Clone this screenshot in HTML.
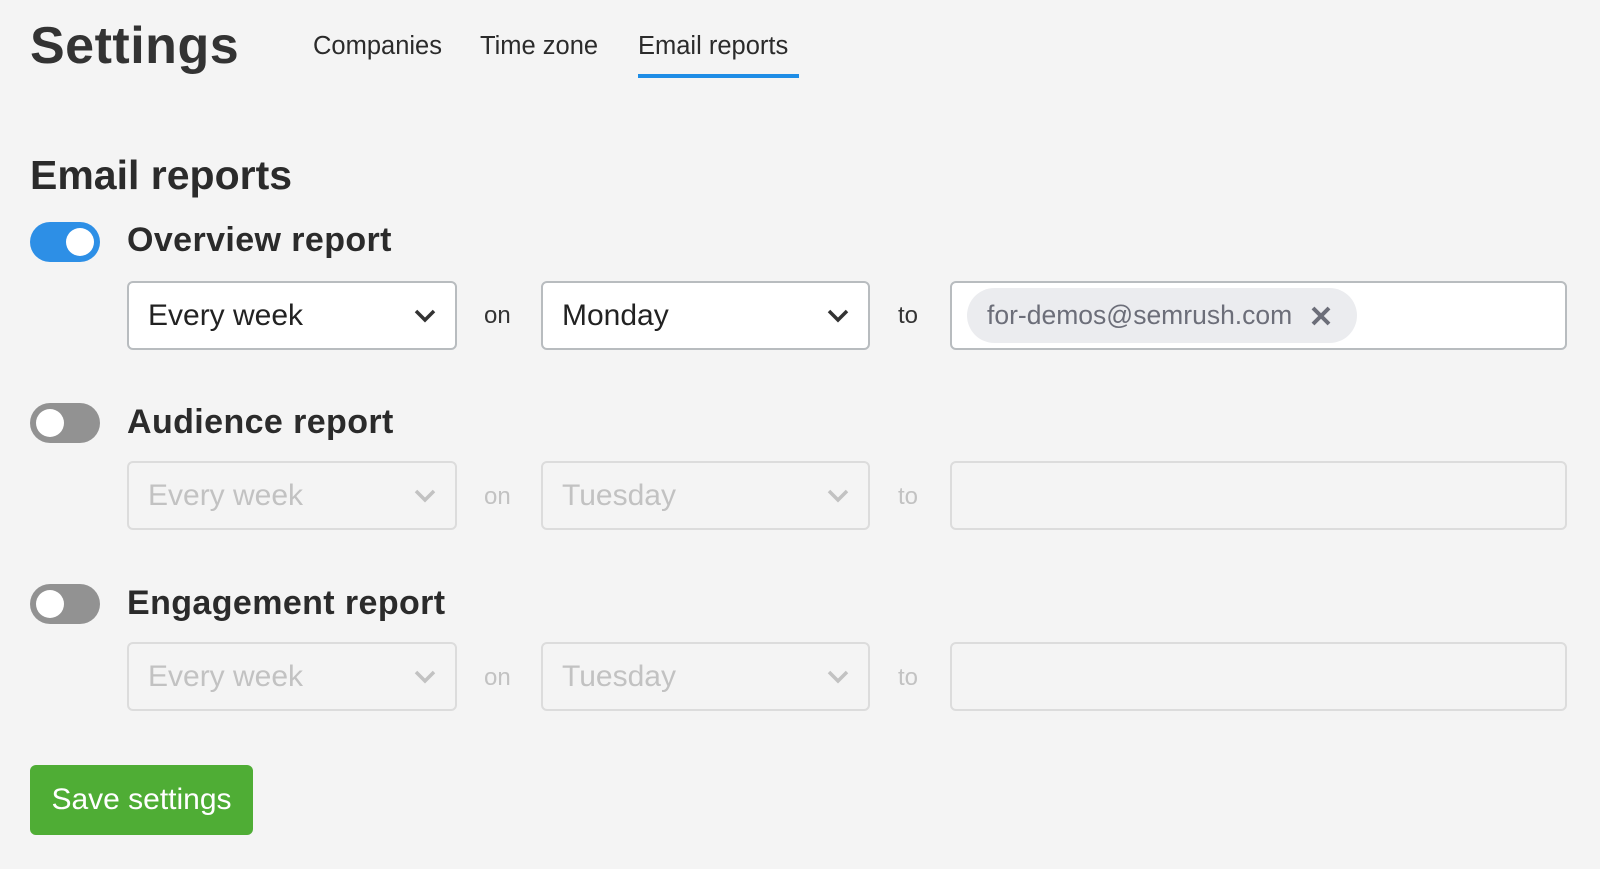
<!DOCTYPE html>
<html><head><meta charset="utf-8"><style>
*{box-sizing:border-box;margin:0;padding:0}
body{width:1600px;height:869px;background:#f4f4f4;font-family:"Liberation Sans",sans-serif;color:#2b2b2b;position:relative;overflow:hidden}
.a{position:absolute;white-space:nowrap}
.tg{position:absolute;left:30px;width:70px;height:40px;border-radius:20px}
.tg i{position:absolute;top:6px;width:28px;height:28px;border-radius:50%;background:#fff}
.on{background:#2d8fe6}.on i{right:6px}
.off{background:#929292}.off i{left:6px}
.lbl{left:127px;font-size:34px;font-weight:bold;letter-spacing:0.4px}
.sel{position:absolute;height:69px;border:2px solid #b8bcbf;border-radius:6px;background:#fff}
.sel span{position:absolute;left:19px;top:0;line-height:65px;font-size:30px;color:#222}
.sel svg{position:absolute;right:18px;top:25px}
.dis{background:#f4f4f4;border-color:#dcdcdc}
.dis span{color:#c2c2c2}
.sm{font-size:24px;color:#333}
.smd{font-size:24px;color:#c2c2c2}
.tab{font-size:25.5px;line-height:30px;top:31px}
</style></head><body>
<div class="a" style="left:30px;top:16px;font-size:52px;line-height:60px;color:#333;font-weight:bold;letter-spacing:0.5px">Settings</div>
<div class="a tab" style="left:313px">Companies</div>
<div class="a tab" style="left:480px">Time zone</div>
<div class="a tab" style="left:638px">Email reports</div>
<div class="a" style="left:638px;top:74px;width:161px;height:4px;background:#1e8de6"></div>
<div class="a" style="left:30px;top:150px;font-size:41px;line-height:50px;font-weight:bold;color:#2b2b2b">Email reports</div>

<div class="tg on" style="top:222px"><i></i></div>
<div class="a lbl" style="top:220px;line-height:40px">Overview report</div>
<div class="sel" style="left:127px;top:281px;width:330px"><span>Every week</span><svg width="24" height="16" viewBox="0 0 24 16"><path d="M3 3l9 9 9-9" fill="none" stroke="#333" stroke-width="3.5"/></svg></div>
<div class="a sm" style="left:484px;top:301px;line-height:30px">on</div>
<div class="sel" style="left:541px;top:281px;width:329px"><span>Monday</span><svg width="24" height="16" viewBox="0 0 24 16"><path d="M3 3l9 9 9-9" fill="none" stroke="#333" stroke-width="3.5"/></svg></div>
<div class="a sm" style="left:898px;top:301px;line-height:30px">to</div>
<div class="sel" style="left:950px;top:281px;width:617px"></div>
<div class="a" style="left:967px;top:288px;width:390px;height:55px;border-radius:28px;background:#ebecef"></div>
<div class="a" style="left:987px;top:300px;font-size:26.5px;line-height:30px;color:#6c6e79">for-demos@semrush.com</div>
<svg class="a" style="left:1310px;top:305px" width="22" height="22" viewBox="0 0 22 22"><path d="M3 3l16 16M19 3L3 19" stroke="#6c6e79" stroke-width="4"/></svg>

<div class="tg off" style="top:403px"><i></i></div>
<div class="a lbl" style="top:402px;line-height:40px">Audience report</div>
<div class="sel dis" style="left:127px;top:461px;width:330px"><span>Every week</span><svg width="24" height="16" viewBox="0 0 24 16"><path d="M3 3l9 9 9-9" fill="none" stroke="#c2c2c2" stroke-width="3.5"/></svg></div>
<div class="a smd" style="left:484px;top:482px;line-height:30px">on</div>
<div class="sel dis" style="left:541px;top:461px;width:329px"><span>Tuesday</span><svg width="24" height="16" viewBox="0 0 24 16"><path d="M3 3l9 9 9-9" fill="none" stroke="#c2c2c2" stroke-width="3.5"/></svg></div>
<div class="a smd" style="left:898px;top:482px;line-height:30px">to</div>
<div class="sel dis" style="left:950px;top:461px;width:617px"></div>

<div class="tg off" style="top:584px"><i></i></div>
<div class="a lbl" style="top:583px;line-height:40px">Engagement report</div>
<div class="sel dis" style="left:127px;top:642px;width:330px"><span>Every week</span><svg width="24" height="16" viewBox="0 0 24 16"><path d="M3 3l9 9 9-9" fill="none" stroke="#c2c2c2" stroke-width="3.5"/></svg></div>
<div class="a smd" style="left:484px;top:663px;line-height:30px">on</div>
<div class="sel dis" style="left:541px;top:642px;width:329px"><span>Tuesday</span><svg width="24" height="16" viewBox="0 0 24 16"><path d="M3 3l9 9 9-9" fill="none" stroke="#c2c2c2" stroke-width="3.5"/></svg></div>
<div class="a smd" style="left:898px;top:663px;line-height:30px">to</div>
<div class="sel dis" style="left:950px;top:642px;width:617px"></div>

<div class="a" style="left:30px;top:765px;width:223px;height:70px;border-radius:6px;background:#4fad35;color:#fff;font-size:30px;line-height:70px;text-align:center">Save settings</div>
</body></html>
